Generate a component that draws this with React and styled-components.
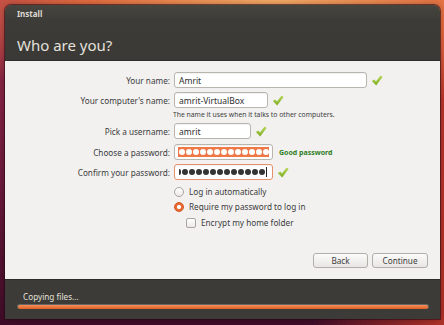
import styled, { createGlobalStyle } from "styled-components"

const GlobalStyle = createGlobalStyle`
  html, body {
    margin: 0;
    padding: 0;
  }
  body {
    width: 444px;
    height: 325px;
    overflow: hidden;
    font-family: "Noto Sans", "DejaVu Sans", sans-serif;
    background:
      radial-gradient(120% 45% at 62% 0%, #f4aa66 0%, #e26c40 35%, rgba(214, 80, 60, 0) 75%),
      linear-gradient(90deg, rgba(0, 0, 0, 0) 70%, rgba(196, 58, 40, 0.85) 100%),
      linear-gradient(180deg, #9c2c4c 0%, #6e1a3c 55%, #3e0c28 100%);
  }
`

const Window = styled.div`
  margin: 5px 0 0 5px;
  width: 435px;
  border-radius: 6px 6px 0 0;
  overflow: hidden;
  box-shadow: 0 0 0 1px rgba(40, 10, 20, 0.55), 0 0 6px rgba(0, 0, 0, 0.35);
  display: flex;
  flex-direction: column;
`

const Header = styled.div`
  height: 56px;
  box-sizing: border-box;
  padding: 4px 12px 0;
  background: linear-gradient(180deg, #46453f 0%, #3c3b37 30%, #3a3935 100%);
  border-bottom: 1px solid #2e2d2a;
`

const Caption = styled.div`
  font-size: 8px;
  font-weight: bold;
  line-height: 10px;
  color: #dfdbd2;
`

const Title = styled.div`
  margin-top: 16px;
  font-size: 15px;
  line-height: 20px;
  color: #e4e1dc;
`

const Content = styled.div`
  height: 218px;
  box-sizing: border-box;
  padding-top: 11px;
  background: #f2f1f0;
  color: #3c3c3c;
  font-size: 8.2px;
`

const Row = styled.div`
  display: flex;
  align-items: center;
  height: 16px;
  margin-bottom: ${(p) => p.gap ?? 4}px;
`

const Label = styled.div`
  width: 165px;
  text-align: right;
  margin-right: 4px;
  white-space: nowrap;
`

const Input = styled.div`
  box-sizing: border-box;
  width: ${(p) => p.w}px;
  height: 16px;
  border: 1px solid ${(p) => (p.focus ? "#e8906a" : "#b8b4ae")};
  border-radius: 3px;
  background: #fff;
  padding: ${(p) => (p.selected ? "2px 3px" : "0 4px")};
  display: flex;
  align-items: center;
  overflow: hidden;
  box-shadow: inset 0 1px 1px rgba(0, 0, 0, 0.06);
  white-space: nowrap;
  font-size: 8.5px;
  color: #2e2e2e;
`

const Selection = styled.div`
  flex: 1;
  height: 100%;
  background: #f07746;
  display: flex;
  align-items: center;
  padding-left: 1px;
  overflow: hidden;
`

const Dot = styled.span`
  flex: none;
  width: 6px;
  height: 6px;
  border-radius: 50%;
  margin-right: 1px;
  background: ${(p) => (p.light ? "#fff" : "#333")};
`

const Caret = styled.span`
  flex: none;
  width: 1px;
  height: 10px;
  background: #222;
`

const Hint = styled.div`
  margin-left: 168px;
  font-size: 6.8px;
  line-height: 11px;
  height: 11px;
  margin-top: -3px;
  margin-bottom: 3px;
  color: #3c3c3c;
`

const Strength = styled.span`
  margin-left: 6px;
  font-size: 7px;
  font-weight: bold;
  color: #2f7d1e;
`

const Option = styled.div`
  display: flex;
  align-items: center;
  height: 15px;
  margin-left: ${(p) => p.indent}px;
  margin-top: ${(p) => p.top ?? 0}px;
`

const Radio = styled.span`
  box-sizing: border-box;
  width: 10px;
  height: 10px;
  border-radius: 50%;
  margin-right: 5px;
  border: 1px solid ${(p) => (p.on ? "#d5541f" : "#aaa59f")};
  background: ${(p) =>
    p.on
      ? "radial-gradient(circle, #fff 0 1.8px, #ea6a33 2.3px)"
      : "linear-gradient(#fff, #eceae8)"};
`

const Box = styled.span`
  box-sizing: border-box;
  width: 10px;
  height: 10px;
  border-radius: 2px;
  margin-right: 5px;
  border: 1px solid #aaa59f;
  background: linear-gradient(#fff, #eceae8);
`

const Buttons = styled.div`
  display: flex;
  justify-content: flex-end;
  gap: 4px;
  margin-top: 23px;
  padding-right: 12px;
`

const Button = styled.div`
  box-sizing: border-box;
  width: ${(p) => p.w}px;
  height: 15px;
  border: 1px solid #b2aea8;
  border-radius: 3px;
  background: linear-gradient(#fbfbfa, #e8e6e3);
  display: flex;
  align-items: center;
  justify-content: center;
  font-size: 8.2px;
  color: #3c3c3c;
`

const Footer = styled.div`
  height: 40px;
  box-sizing: border-box;
  padding: 11px 11px 0 12px;
  background: #3c3b37;
  border-top: 1px solid #2c2b28;
`

const Status = styled.div`
  font-size: 8.2px;
  line-height: 11px;
  color: #e4e1dc;
  padding-left: 6px;
`

const Track = styled.div`
  margin-top: 2px;
  height: 5px;
  border-radius: 3px;
  background: #6a6761;
  padding: 0 1px;
  display: flex;
  align-items: center;
`

const Fill = styled.div`
  height: 4px;
  border-radius: 2px;
  background: linear-gradient(#f49060, #e0601f);
`

const Check = () => (
  <svg width="12" height="11" viewBox="0 0 12 11" style={{ marginLeft: 4, flex: "none" }}>
    <defs>
      <linearGradient id="ck" x1="0" y1="0" x2="0" y2="1">
        <stop offset="0" stopColor="#b6d85a" />
        <stop offset="1" stopColor="#7fae22" />
      </linearGradient>
    </defs>
    <path d="M0.8 6 L3.4 4.4 L4.9 6.6 L9.6 0.6 L11.6 2 L5.2 10.4 Z" fill="url(#ck)" />
  </svg>
)

const dots = (n, light) => Array.from({ length: n }, (_, i) => <Dot key={i} light={light} />)

const App = () => {
  return (
    <>
      <GlobalStyle />
      <Window>
        <Header>
          <Caption>Install</Caption>
          <Title>Who are you?</Title>
        </Header>
        <Content>
          <Row>
            <Label>Your name:</Label>
            <Input w={193}>Amrit</Input>
            <Check />
          </Row>
          <Row>
            <Label>Your computer's name:</Label>
            <Input w={94}>amrit-VirtualBox</Input>
            <Check />
          </Row>
          <Hint>The name it uses when it talks to other computers.</Hint>
          <Row gap={5}>
            <Label>Pick a username:</Label>
            <Input w={77}>amrit</Input>
            <Check />
          </Row>
          <Row>
            <Label>Choose a password:</Label>
            <Input w={99} selected>
              <Selection>{dots(13, true)}</Selection>
            </Input>
            <Strength>Good password</Strength>
          </Row>
          <Row gap={0}>
            <Label>Confirm your password:</Label>
            <Input w={99} focus>
              <Dot style={{ width: 2, borderRadius: "0 3px 3px 0" }} />
              {dots(12, false)}
              <Caret />
            </Input>
            <Check />
          </Row>
          <Option indent={169} top={4}>
            <Radio />
            Log in automatically
          </Option>
          <Option indent={169}>
            <Radio on />
            Require my password to log in
          </Option>
          <Option indent={181} top={1}>
            <Box />
            Encrypt my home folder
          </Option>
          <Buttons>
            <Button w={55}>Back</Button>
            <Button w={56}>Continue</Button>
          </Buttons>
        </Content>
        <Footer>
          <Status>Copying files...</Status>
          <Track>
            <Fill style={{ width: "100%" }} />
          </Track>
        </Footer>
      </Window>
    </>
  )
}

export default App
